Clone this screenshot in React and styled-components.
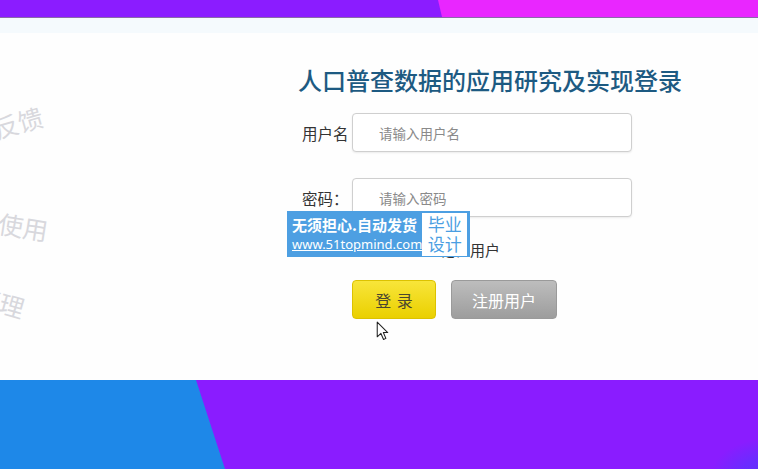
import React from 'react'
import styled, { createGlobalStyle } from 'styled-components'

const GlobalStyle = createGlobalStyle`
html, body {
  margin: 0;
  padding: 0;
  overflow: hidden;
  background: #fefefe;
}
* { box-sizing: border-box; }
`

const CJK = `"Noto Sans CJK SC", "Noto Sans", sans-serif`

const App = () => {
    return (
        <>
            <GlobalStyle />
            <Page>
                <TopBand />
                <Panel>
                    <Faded top={79} left={-58} rotate={-16}>意见反馈</Faded>
                    <Faded top={194} left={-52} rotate={9}>方便使用</Faded>
                    <Faded top={272} left={-26} rotate={16}>管理</Faded>
                    <Spacer />
                    <Form>
                        <Title>人口普查数据的应用研究及实现登录</Title>
                        <Field>
                            <Label>用户名</Label>
                            <Input placeholder="请输入用户名" />
                        </Field>
                        <Field gap={26}>
                            <Label>密码：</Label>
                            <Input type="password" placeholder="请输入密码" />
                        </Field>
                        <CheckRow>
                            <input type="checkbox" />
                            <span>记住用户</span>
                        </CheckRow>
                        <Buttons>
                            <LoginButton>登 录</LoginButton>
                            <RegisterButton>注册用户</RegisterButton>
                        </Buttons>
                    </Form>
                    <Badge>
                        <BadgeText>
                            <strong>无须担心.自动发货</strong>
                            <u>www.51topmind.com</u>
                        </BadgeText>
                        <BadgeTag>毕业<br />设计</BadgeTag>
                    </Badge>
                    <Cursor viewBox="0 0 12 19" width="13" height="20">
                        <path d="M1 1 L1 15 L4.5 11.8 L7 17.5 L9.2 16.5 L6.8 11 L11 11 Z"
                            fill="#fff" stroke="#222" strokeWidth="1" strokeLinejoin="round" />
                    </Cursor>
                </Panel>
                <BottomBand />
            </Page>
        </>
    )
}

export default App

const Page = styled.div`
width: 758px;
height: 469px;
display: flex;
flex-direction: column;
font-family: ${CJK};
overflow: hidden;
`

const TopBand = styled.div`
position: relative;
height: 18px;
flex-shrink: 0;
background: #8b1cff;
border-bottom: 1px solid #8a6aa8;
&::after {
  content: '';
  position: absolute;
  inset: 0;
  background: #e926ff;
  clip-path: polygon(438px 0, 100% 0, 100% 100%, 442px 100%);
}
`

const Panel = styled.div`
position: relative;
height: 362px;
flex-shrink: 0;
display: flex;
background: linear-gradient(#f5fafd 0 15px, #fefefe 15px);
`

const Faded = styled.span`
position: absolute;
top: ${p => p.top}px;
left: ${p => p.left}px;
transform: rotate(${p => p.rotate}deg);
transform-origin: right center;
font-size: 25px;
color: #d8d8dd;
white-space: nowrap;
`

const Spacer = styled.div`
width: 290px;
flex-shrink: 0;
`

const Form = styled.div`
width: 400px;
padding-top: 46px;
display: flex;
flex-direction: column;
`

const Title = styled.h1`
margin: 0 0 18px;
font-size: 24px;
line-height: 31px;
font-weight: 500;
text-align: center;
color: #1d5a82;
`

const Field = styled.div`
display: flex;
align-items: center;
padding-left: 12px;
margin-top: ${p => p.gap || 0}px;
`

const Label = styled.label`
width: 50px;
font-size: 15.5px;
color: #333;
white-space: nowrap;
`

const Input = styled.input`
width: 280px;
height: 39px;
border: 1px solid #cfcfcf;
border-radius: 4px;
padding: 0 0 0 26px;
font-family: ${CJK};
font-size: 13.5px;
color: #333;
background: #fff;
box-shadow: 0 1px 2px rgba(0, 0, 0, 0.08);
outline: none;
&::placeholder { color: #8a8a8a; }
`

const CheckRow = styled.label`
display: flex;
align-items: center;
gap: 3px;
margin-top: 22px;
padding-left: 134px;
height: 20px;
font-size: 15px;
color: #333;
input { margin: 0; width: 13px; height: 13px; }
`

const Buttons = styled.div`
display: flex;
gap: 15px;
margin-top: 21px;
padding-left: 62px;
`

const BaseButton = styled.button`
height: 39px;
border-radius: 4px;
font-family: ${CJK};
font-size: 16px;
cursor: pointer;
padding: 0;
`

const LoginButton = styled(BaseButton)`
width: 84px;
border: 1px solid #dcc200;
background: linear-gradient(#f8e53a, #ead000);
color: #4a4630;
letter-spacing: 1px;
padding-left: 1px;
`

const RegisterButton = styled(BaseButton)`
width: 106px;
border: 1px solid #9a9a9a;
background: linear-gradient(#bdbdbd, #9d9d9d);
color: #fff;
`

const Badge = styled.div`
position: absolute;
z-index: 2;
left: 287px;
top: 193px;
width: 183px;
height: 46px;
background: #4d9fe2;
display: flex;
align-items: center;
justify-content: space-between;
padding: 0 3px 0 5px;
`

const BadgeText = styled.div`
display: flex;
flex-direction: column;
color: #fff;
strong { font-size: 15px; line-height: 20px; font-weight: 700; }
u { font-family: "Noto Sans", sans-serif; font-size: 13px; line-height: 19px; }
`

const BadgeTag = styled.div`
width: 45px;
height: 43px;
background: #fff;
color: #4a9ee2;
font-size: 17px;
line-height: 20px;
text-align: center;
padding-top: 1px;
`

const Cursor = styled.svg`
position: absolute;
z-index: 3;
left: 376px;
top: 303px;
`

const BottomBand = styled.div`
position: relative;
flex: 1;
background: #1e88e8;
&::after {
  content: '';
  position: absolute;
  inset: 0;
  background: radial-gradient(ellipse 60px 40px at 770px 98px, #5a34f5 0, #6a2cff 50%, rgba(138, 28, 255, 0) 100%), #8a1cff;
  clip-path: polygon(196px 0, 100% 0, 100% 100%, 225px 100%);
}
`
